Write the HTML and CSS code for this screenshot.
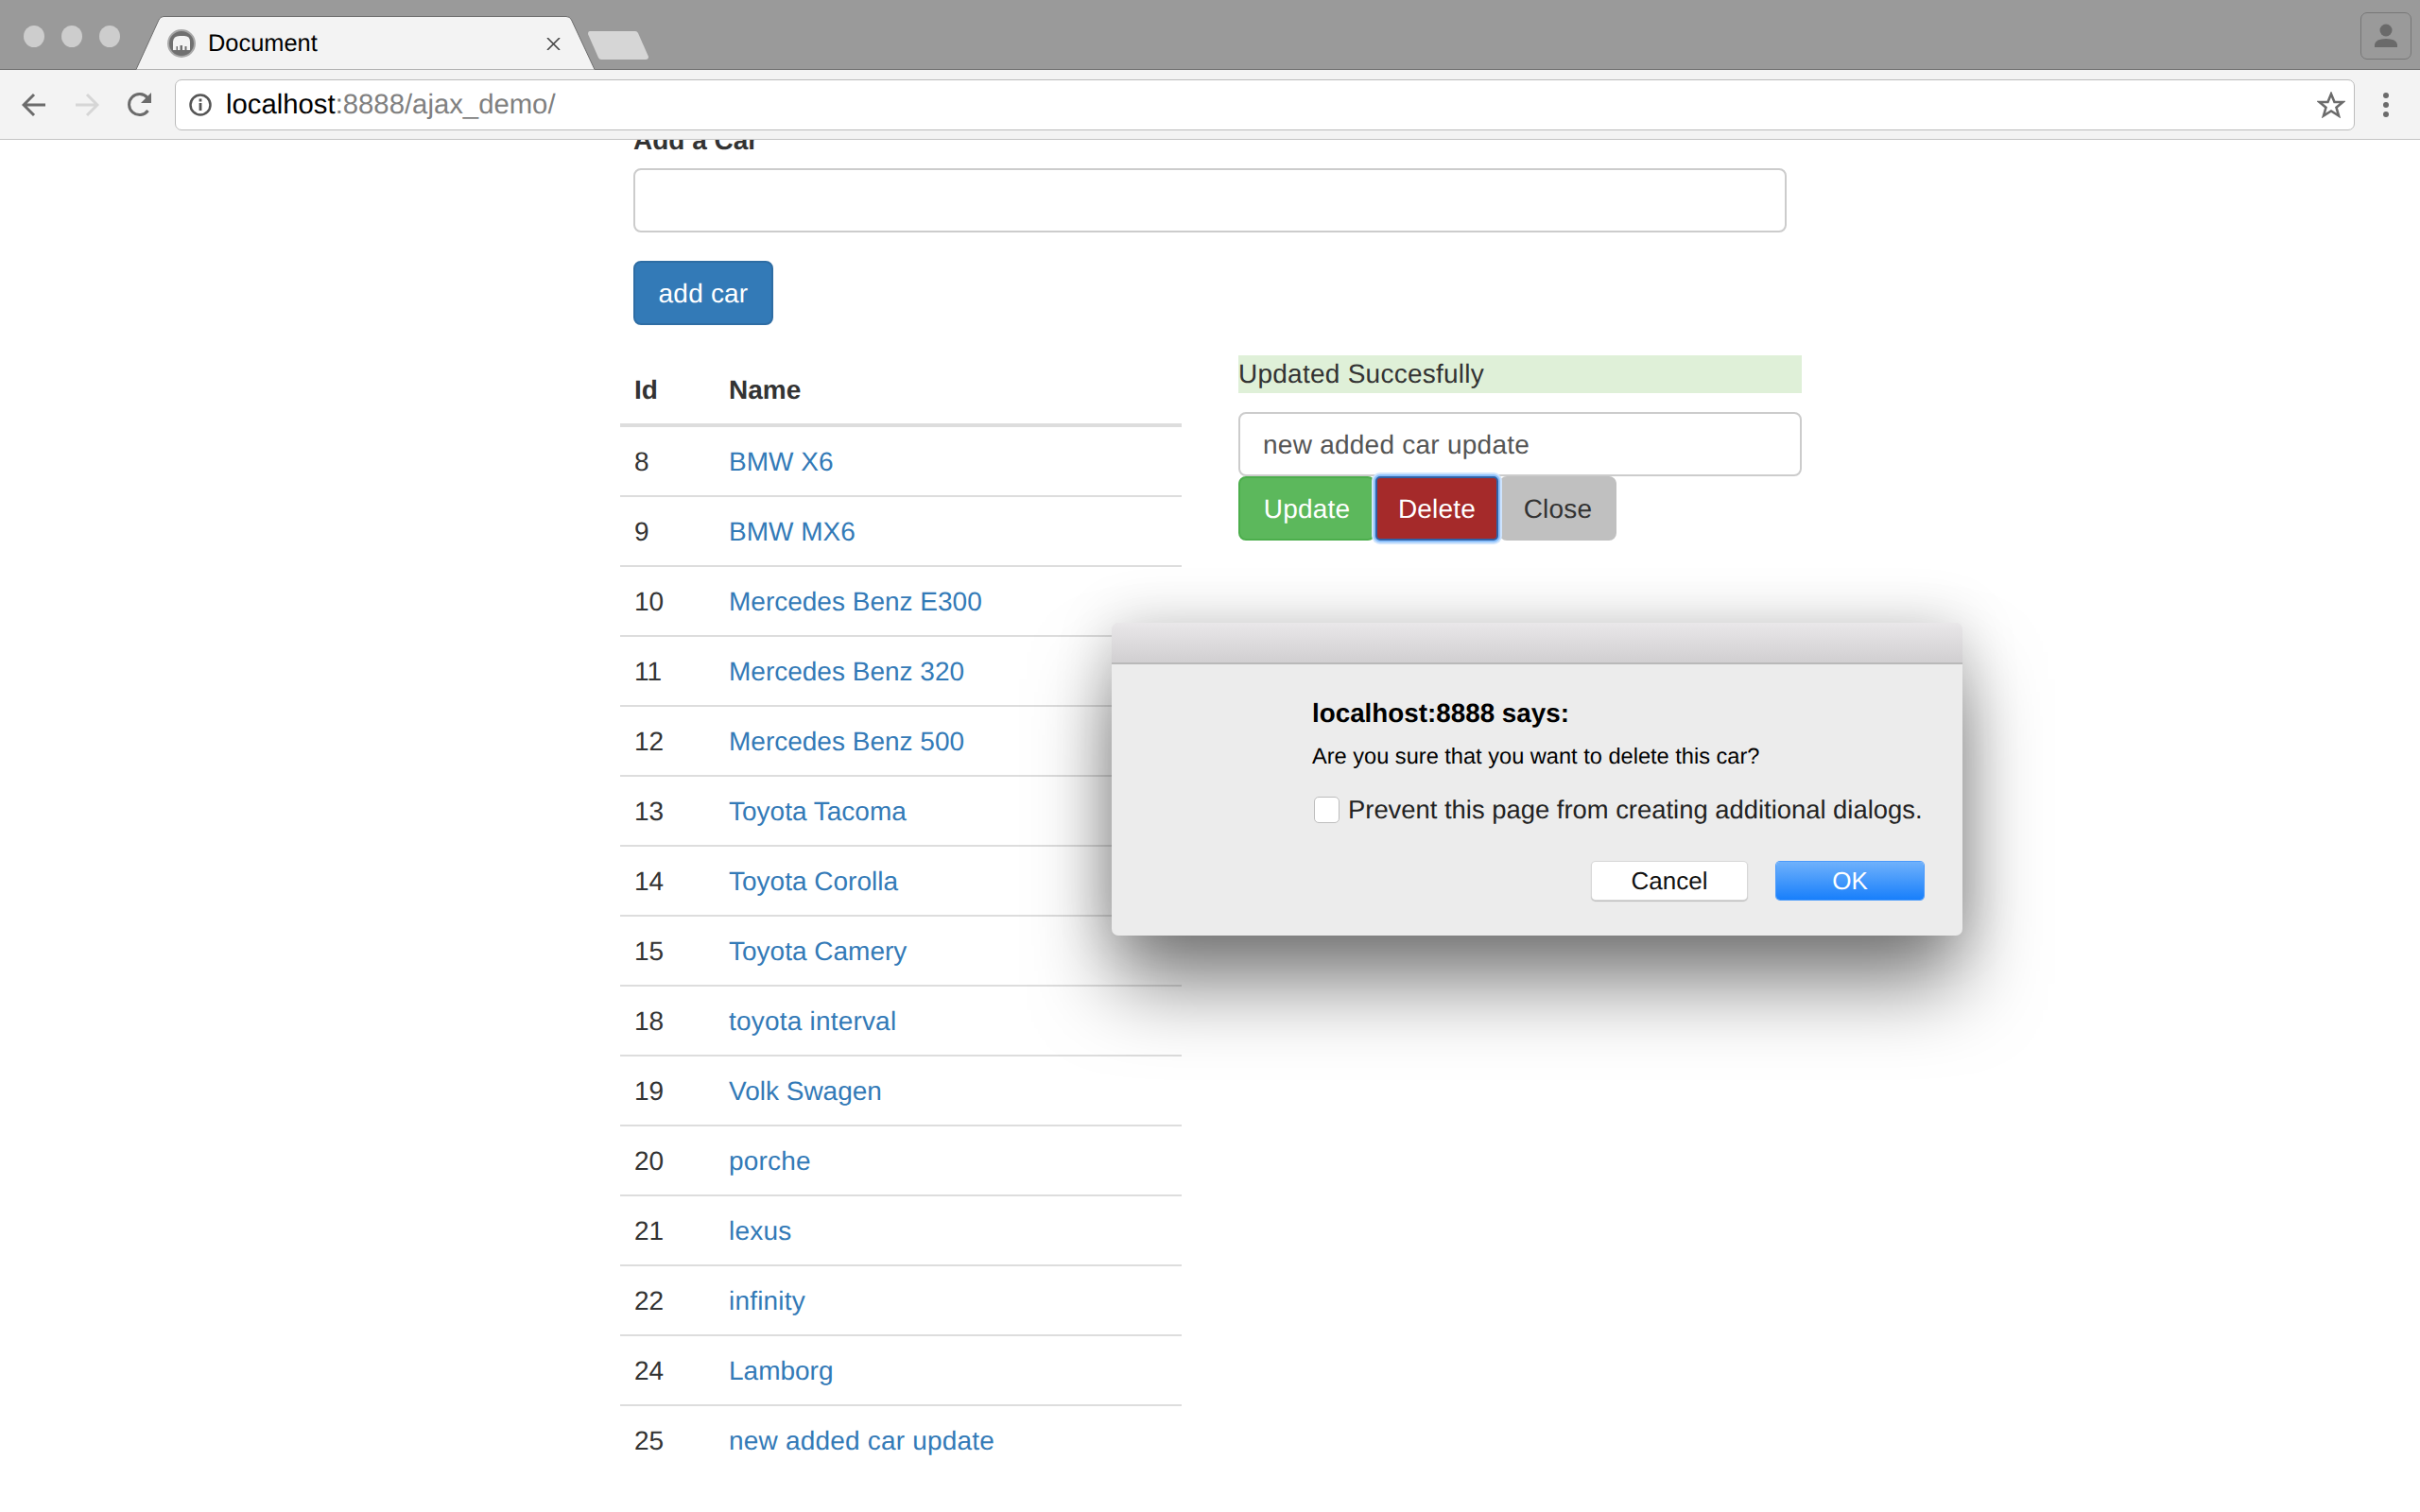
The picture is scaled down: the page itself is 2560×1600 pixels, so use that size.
FILE: index.html
```html
<!DOCTYPE html>
<html>
    <head>
    <title>Document</title>
    <link rel="stylesheet" href="styles.css">
    </head>
    <body>
    <div class="tabstrip">
        <span class="light"></span>
        <span class="light"></span>
        <span class="light"></span>
        <div class="tab">
            <svg class="tab-shape" viewBox="0 0 485 57" preserveAspectRatio="none">
                <path d="M0 56.5 L24 4 Q25.500 .5 29 .5 H455 Q459 .5 460.500 4 L485 56.5" fill="#f3f3f3" stroke="#6e6e6e" stroke-width="1"/>
            </svg>
            <svg class="favicon" viewBox="0 0 30 30">
                <circle cx="15" cy="15" r="14" fill="#707070" stroke="#a8a8a8" stroke-width="2"/>
                <path d="M6 22 V13 Q6.500 7 13 7 H18 Q24 7 24 13 V22 H20.500 V18 H18.500 V22 H16 V17 H13.500 V22 H11 V18 H9.500 V22 Z" fill="#f4f4f4"/>
            </svg>
            <span class="tab-title">Document</span>
            <svg class="tab-close" viewBox="0 0 15 13">
                <path d="M1 0 L14 13 M14 0 L1 13" stroke="#444" stroke-width="1.600" fill="none"/>
            </svg>
        </div>
        <svg class="newtab" viewBox="0 0 64 30">
            <path d="M2 0 H50 Q52 0 53 2 L64 27 Q64 30 61 30 H14 Q12 30 11 28 L0 3 Q0 0 2 0 Z" fill="#d6d6d6"/>
        </svg>
        <div class="avatar">
            <svg viewBox="0 0 26 26" width="26" height="26">
                <circle cx="13" cy="7" r="6.500" fill="#6a6a6a"/>
                <path d="M1 25 V22 Q2 16 13 16 Q24 16 25 22 V25 Z" fill="#6a6a6a"/>
            </svg>
        </div>
    </div>

    <div class="toolbar">
        <svg class="navicon" viewBox="0 0 26 26">
            <path d="M25 13 H3 M13 2 L2 13 L13 24" fill="none" stroke="#6b6b6b" stroke-width="3"/>
        </svg>
        <svg class="navicon" viewBox="0 0 26 26">
            <path d="M1 13 H23 M13 2 L24 13 L13 24" fill="none" stroke="#d6d6d6" stroke-width="3"/>
        </svg>
        <svg class="navicon" viewBox="0 0 26 26">
            <path d="M21.500 19 A11 11 0 1 1 21 5.500" fill="none" stroke="#6b6b6b" stroke-width="3"/>
            <path d="M25 0 V11 H14 Z" fill="#6b6b6b"/>
        </svg>
        <div class="omnibox">
            <svg class="info" viewBox="0 0 24 24">
                <circle cx="12" cy="12" r="10.500" fill="none" stroke="#555" stroke-width="2.500"/>
                <rect x="10.600" y="10" width="2.800" height="8" fill="#555"/>
                <rect x="10.600" y="5.500" width="2.800" height="3" fill="#555"/>
            </svg>
            <span class="url">localhost<span class="url-rest">:8888/ajax_demo/</span></span>
            <svg class="star" viewBox="0 0 30 28">
                <path d="M15 2.500 L18.500 11 H27.500 L20.500 16.800 L23 25.500 L15 20.500 L7 25.500 L9.500 16.800 L2.500 11 H11.500 Z" fill="none" stroke="#6b6b6b" stroke-width="2.600"/>
            </svg>
        </div>
        <div class="menu">
            <span></span>
            <span></span>
            <span></span>
        </div>
    </div>

    <div class="page">
        <div class="add-form">
            <label class="add-label">Add a Car</label>
            <input class="field" type="text">
            <button class="btn btn-add">add car</button>
        </div>
        <div class="columns">
            <table class="cars">
                <thead>
                    <tr><th class="col-id">Id</th><th>Name</th></tr>
                </thead>
                <tbody>
                    <tr><td>8</td><td><a href="#">BMW X6</a></td></tr>
                    <tr><td>9</td><td><a href="#">BMW MX6</a></td></tr>
                    <tr><td>10</td><td><a href="#">Mercedes Benz E300</a></td></tr>
                    <tr><td>11</td><td><a href="#">Mercedes Benz 320</a></td></tr>
                    <tr><td>12</td><td><a href="#">Mercedes Benz 500</a></td></tr>
                    <tr><td>13</td><td><a href="#">Toyota Tacoma</a></td></tr>
                    <tr><td>14</td><td><a href="#">Toyota Corolla</a></td></tr>
                    <tr><td>15</td><td><a href="#">Toyota Camery</a></td></tr>
                    <tr class="lower"><td>18</td><td><a href="#">toyota interval</a></td></tr>
                    <tr><td>19</td><td><a href="#">Volk Swagen</a></td></tr>
                    <tr class="lower"><td>20</td><td><a href="#">porche</a></td></tr>
                    <tr class="lower"><td>21</td><td><a href="#">lexus</a></td></tr>
                    <tr class="lower"><td>22</td><td><a href="#">infinity</a></td></tr>
                    <tr><td>24</td><td><a href="#">Lamborg</a></td></tr>
                    <tr class="lower"><td>25</td><td><a href="#">new added car update</a></td></tr>
                </tbody>
            </table>
            <div class="editor">
                <div class="alert">Updated Succesfully</div>
                <input class="field" type="text" value="new added car update">
                <div class="actions">
                    <button class="btn btn-update">Update</button>
                    <button class="btn btn-delete">Delete</button>
                    <button class="btn btn-close">Close</button>
                </div>
            </div>
        </div>
    </div>

    <div class="dialog">
        <div class="dialog-title"></div>
        <div class="dialog-body">
            <div class="dialog-head">localhost:8888 says:</div>
            <div class="dialog-msg">Are you sure that you want to delete this car?</div>
            <label class="dialog-check"><input type="checkbox"> Prevent this page from creating additional dialogs.</label>
            <div class="dialog-buttons">
                <button class="mac-btn">Cancel</button>
                <button class="mac-btn mac-ok">OK</button>
            </div>
        </div>
    </div>
    </body>
</html>
```

FILE: styles.css
```css
html, body {
    margin: 0;
    height: 1600px;
    overflow: hidden;
    background: #fff;
}
body {
    position: relative;
    font-family: "Liberation Sans", Arial, sans-serif;
    font-size: 28px;
    line-height: 40px;
    color: #333;
    text-rendering: geometricPrecision;
}

/* browser chrome */
.tabstrip {
    display: flex;
    align-items: flex-start;
    height: 73px;
    padding-left: 25px;
    background: #9a9a9a;
    border-bottom: 1px solid #6e6e6e;
}
.light {
    width: 22px;
    height: 23px;
    margin: 27px 18px 0 0;
    border-radius: 50%;
    background: #cdcdcd;
}
.tab {
    position: relative;
    display: flex;
    align-items: center;
    width: 452px;
    height: 57px;
    margin: 17px 0 0 -1px;
    padding-left: 33px;
    color: #000;
    font-size: 25.400px;
}
.tab-shape {
    position: absolute;
    left: 0;
    top: 0;
    width: 485px;
    height: 57px;
}
.favicon {
    position: relative;
    width: 30px;
    height: 30px;
    margin-right: 13px;
}
.tab-title {
    position: relative;
}
.tab-close {
    position: absolute;
    left: 434px;
    top: 23px;
    width: 15px;
    height: 13px;
}
.newtab {
    width: 64px;
    height: 30px;
    margin: 33px 0 0 -7px;
}
.avatar {
    display: flex;
    align-items: center;
    justify-content: center;
    box-sizing: border-box;
    width: 54px;
    height: 50px;
    margin: 13px 9px 0 auto;
    border: 1px solid #777;
    border-radius: 7px;
}
.toolbar {
    display: flex;
    align-items: center;
    height: 73px;
    padding-left: 23px;
    background: #f3f3f3;
    border-bottom: 1px solid #c4c4c4;
}
.navicon {
    width: 26px;
    height: 26px;
    margin-right: 30px;
}
.navicon:nth-child(3) {
    margin-right: 24px;
}
.omnibox {
    display: flex;
    align-items: center;
    box-sizing: border-box;
    width: 2306px;
    height: 54px;
    padding: 0 9px 0 14px;
    background: #fff;
    border: 1px solid #bbb;
    border-radius: 7px;
}
.info {
    width: 24px;
    height: 24px;
    margin-right: 15px;
}
.url {
    color: #000;
    font-size: 29.300px;
}
.url-rest {
    color: #808080;
}
.star {
    width: 30px;
    height: 28px;
    margin-left: auto;
}
.menu {
    display: flex;
    flex-direction: column;
    gap: 4px;
    margin-left: 30px;
}
.menu span {
    width: 6px;
    height: 6px;
    border-radius: 50%;
    background: #6b6b6b;
}

/* page */
.page {
    height: 1452px;
    padding-left: 656px;
    overflow: hidden;
}
.add-form {
    width: 1220px;
    margin: -19px 0 0 14px;
}
.add-label {
    display: block;
    margin-bottom: 9px;
    font-weight: bold;
}
.field {
    display: block;
    box-sizing: border-box;
    width: 100%;
    height: 68px;
    padding: 13px 24px 11px;
    font: inherit;
    letter-spacing: .25px;
    color: #555;
    background: #fff;
    border: 2px solid #ccc;
    border-radius: 8px;
    outline: none;
    text-rendering: geometricPrecision;
}
.btn {
    box-sizing: border-box;
    height: 68px;
    padding: 1px 20px 0;
    font: inherit;
    letter-spacing: .2px;
    border: 2px solid transparent;
    border-radius: 8px;
    text-rendering: geometricPrecision;
}
.btn-add {
    display: block;
    width: 148px;
    margin-top: 30px;
    color: #fff;
    background: #337ab7;
    border-color: #2e6da4;
}
.columns {
    display: flex;
    align-items: flex-start;
    gap: 60px;
    margin-top: 32px;
}
.cars {
    width: 594px;
    border-spacing: 0;
}
.cars th {
    padding: 17px 15px 15px;
    text-align: left;
    border-bottom: 4px solid #ddd;
}
.cars .col-id {
    width: 70px;
}
.cars td {
    padding: 17px 15px 15px;
    border-bottom: 2px solid #ddd;
}
.cars tr:last-child td {
    border-bottom: 0;
}
.cars a {
    color: #337ab7;
    text-decoration: none;
}
.cars .lower a {
    letter-spacing: .2px;
}
.editor {
    width: 596px;
}
.alert {
    margin-bottom: 20px;
    letter-spacing: .25px;
    background: #dff0d8;
}
.actions {
    display: flex;
}
.btn-update {
    width: 145px;
    color: #fff;
    background: #5cb85c;
    border-color: #4cae4c;
}
.btn-delete {
    position: relative;
    width: 130px;
    margin-right: 1px;
    color: #fff;
    background: #a52a2a;
    border-color: #2f62a8;
    border-radius: 5px;
    box-shadow: 0 0 0 2px #8fc2fb, 0 0 0 4px #cfe4fd;
}
.btn-close {
    width: 124px;
    color: #333;
    background: #c0c0c0;
    border-color: #c0c0c0;
}

/* javascript confirm sheet */
.dialog {
    position: absolute;
    left: 1176px;
    top: 659px;
    width: 900px;
    height: 331px;
    border-radius: 7px;
    background: #ececec;
    box-shadow: 0 55px 85px -4px rgba(0, 0, 0, .5), 0 0 60px rgba(0, 0, 0, .18);
    color: #000;
}
.dialog-title {
    box-sizing: border-box;
    height: 44px;
    border-radius: 7px 7px 0 0;
    background: linear-gradient(#e9e7e9, #d1cfd1);
    border-bottom: 2px solid #b9b9b9;
}
.dialog-body {
    padding: 32px 0 0 212px;
}
.dialog-head {
    font-size: 27.800px;
    font-weight: bold;
    height: 51px;
}
.dialog-msg {
    font-size: 23.600px;
    line-height: 30px;
    height: 51px;
}
.dialog-check {
    display: flex;
    align-items: center;
    gap: 9px;
    height: 40px;
    font-size: 27.400px;
    color: #222;
    white-space: nowrap;
}
.dialog-check input {
    appearance: none;
    box-sizing: border-box;
    width: 27px;
    height: 28px;
    margin: 0 0 0 2px;
    background: #fff;
    border: 1px solid #bdbdbd;
    border-radius: 5px;
}
.dialog-buttons {
    display: flex;
    justify-content: flex-end;
    gap: 31px;
    width: 647px;
    margin-top: 35px;
}
.mac-btn {
    box-sizing: border-box;
    width: 164px;
    height: 40px;
    padding: 0 0 2px;
    font: inherit;
    font-size: 26px;
    color: #111;
    background: #fff;
    border: 0;
    border-radius: 4px;
    box-shadow: 0 0 0 1px #d8d8d8, 0 1px 1px 1px #bcbcbc;
    text-rendering: geometricPrecision;
}
.mac-ok {
    width: 156px;
    color: #fff;
    background: linear-gradient(#6fb1fb, #187ffb);
    box-shadow: 0 0 0 1px #4a9afb;
}
```
